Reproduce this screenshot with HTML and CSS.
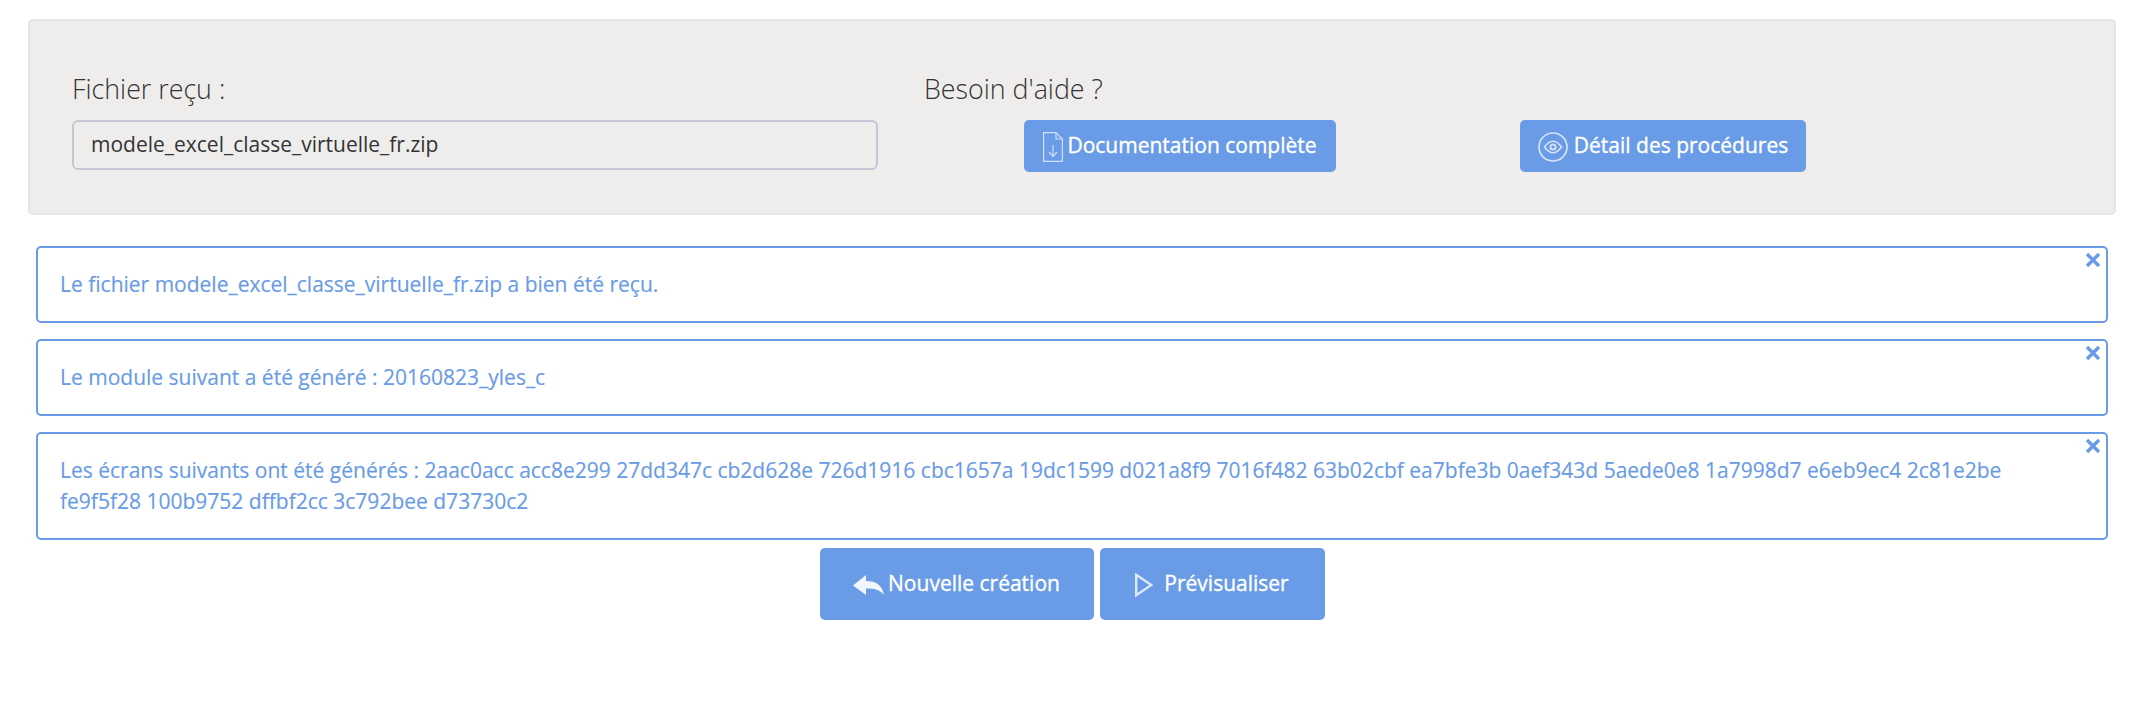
FILE: index.html
```html
<!DOCTYPE html>
<html lang="fr">
<head>
  <meta charset="UTF-8">
  <meta name="viewport" content="width=device-width, initial-scale=1.0">
  <title>Classe virtuelle - Import</title>
  <link rel="stylesheet" href="styles.css">
</head>
<body>
  <div class="well">
    <div class="file-col">
      <h4>Fichier reçu :</h4>
      <div class="file-name">modele_excel_classe_virtuelle_fr.zip</div>
    </div>
    <div class="help-col">
      <h4>Besoin d'aide ?</h4>
      <div class="help-actions">
        <a class="btn btn-doc" href="#">
          <svg class="icon" width="20" height="30" viewBox="0 0 20 30" fill="none" stroke="#cfe0f8" stroke-width="1.2">
            <path d="M.6.6H13L19.4 7V29.4H.6Z"/>
            <path d="M13 .6V7H19.4"/>
            <path d="M10 13V24M6 20l4 4.4 4-4.4"/>
          </svg>
          Documentation complète
        </a>
        <a class="btn btn-proc" href="#">
          <svg class="icon" width="30" height="30" viewBox="0 0 30 30" fill="none" stroke="#d5e3f9">
            <circle cx="15" cy="15" r="14" stroke-width="1.7"/>
            <path d="M6.5 15C9.5 10.8 12.4 9.2 15 9.2S20.5 10.8 23.5 15C20.5 19.2 17.6 20.8 15 20.8S9.5 19.2 6.5 15Z" stroke-width="1.6"/>
            <circle cx="15" cy="15" r="2.6" stroke-width="1.8"/>
          </svg>
          Détail des procédures
        </a>
      </div>
    </div>
  </div>

  <div class="messages">
    <div class="alert">
      <svg class="close" width="16" height="16" viewBox="0 0 16 16"><path d="M2 2L14 14M14 2L2 14"/></svg>
      Le fichier modele_excel_classe_virtuelle_fr.zip a bien été reçu.
    </div>
    <div class="alert">
      <svg class="close" width="16" height="16" viewBox="0 0 16 16"><path d="M2 2L14 14M14 2L2 14"/></svg>
      Le module suivant a été généré : 20160823_yles_c
    </div>
    <div class="alert">
      <svg class="close" width="16" height="16" viewBox="0 0 16 16"><path d="M2 2L14 14M14 2L2 14"/></svg>
      Les écrans suivants ont été générés : 2aac0acc acc8e299 27dd347c cb2d628e 726d1916 cbc1657a 19dc1599 d021a8f9 7016f482 63b02cbf ea7bfe3b 0aef343d 5aede0e8 1a7998d7 e6eb9ec4 2c81e2be fe9f5f28 100b9752 dffbf2cc 3c792bee d73730c2
    </div>
  </div>

  <div class="actions">
    <a class="btn btn-new" href="#">
      <svg class="icon" width="31" height="20" viewBox="0 0 31 20" fill="#f2f6fd">
        <path d="M0 10.5L13 0V6C23 6 29 10 31 20C27 14.5 21 13.5 13 13.5V20Z"/>
      </svg>
      Nouvelle création
    </a>
    <a class="btn btn-preview" href="#">
      <svg class="icon" width="18" height="24" viewBox="0 0 18 24" fill="none" stroke="#dfe9fa" stroke-width="2.4">
        <path d="M1.2 1.8L16.4 12L1.2 22.2Z"/>
      </svg>
      Prévisualiser
    </a>
  </div>
</body>
</html>
```

FILE: styles.css
```css
body {
  font-family: "Open Sans", Arial, sans-serif;
  font-size: 21px;
  line-height: 30px;
  color: #333;
  background: #fff;
  margin: 0;
  padding: 19px 16px 0 28px;
}
a {
  text-decoration: none;
}
h4 {
  font-size: 26.8px;
  font-weight: 300;
  line-height: 34px;
  margin: 0 0 14px;
  color: #333;
}
.well {
  display: flex;
  height: 196px;
  box-sizing: border-box;
  padding: 51px 0 0 42px;
  background: #eeedec;
  border: 2px solid #e5e4e6;
  border-radius: 5px;
}
.file-col {
  width: 806px;
  margin-right: 46px;
}
.file-name {
  box-sizing: border-box;
  height: 50px;
  padding: 7px 17px;
  border: 2px solid #c6c5d6;
  border-radius: 6px;
}
.help-actions {
  display: flex;
  gap: 184px;
  margin: 1px 0 0 100px;
}
.btn {
  display: flex;
  align-items: center;
  justify-content: center;
  box-sizing: border-box;
  padding-bottom: 2px;
  color: #fff;
  background: #699be6;
  border-radius: 5px;
  -webkit-text-stroke: 0.35px #fff;
}
.icon {
  position: relative;
  top: 2px;
}
.btn-doc {
  width: 312px;
  height: 52px;
  gap: 4px;
}
.btn-proc {
  width: 286px;
  height: 52px;
  gap: 6px;
}
.messages {
  margin: 31px 8px 0;
}
.alert {
  position: relative;
  padding: 21px 22px 21.5px;
  margin-bottom: 16px;
  border: 2px solid #699be6;
  border-radius: 5px;
  color: #699be6;
  line-height: 30.5px;
  -webkit-text-stroke: 0.15px #699be6;
}
.close {
  position: absolute;
  top: 4px;
  right: 5px;
  fill: none;
  stroke: #699be6;
  stroke-width: 3.4;
}
.actions {
  display: flex;
  justify-content: center;
  gap: 6px;
  margin-top: -8px;
}
.btn-new {
  width: 274px;
  height: 72px;
  gap: 4px;
}
.btn-preview {
  width: 225px;
  height: 72px;
  gap: 11px;
}
```
